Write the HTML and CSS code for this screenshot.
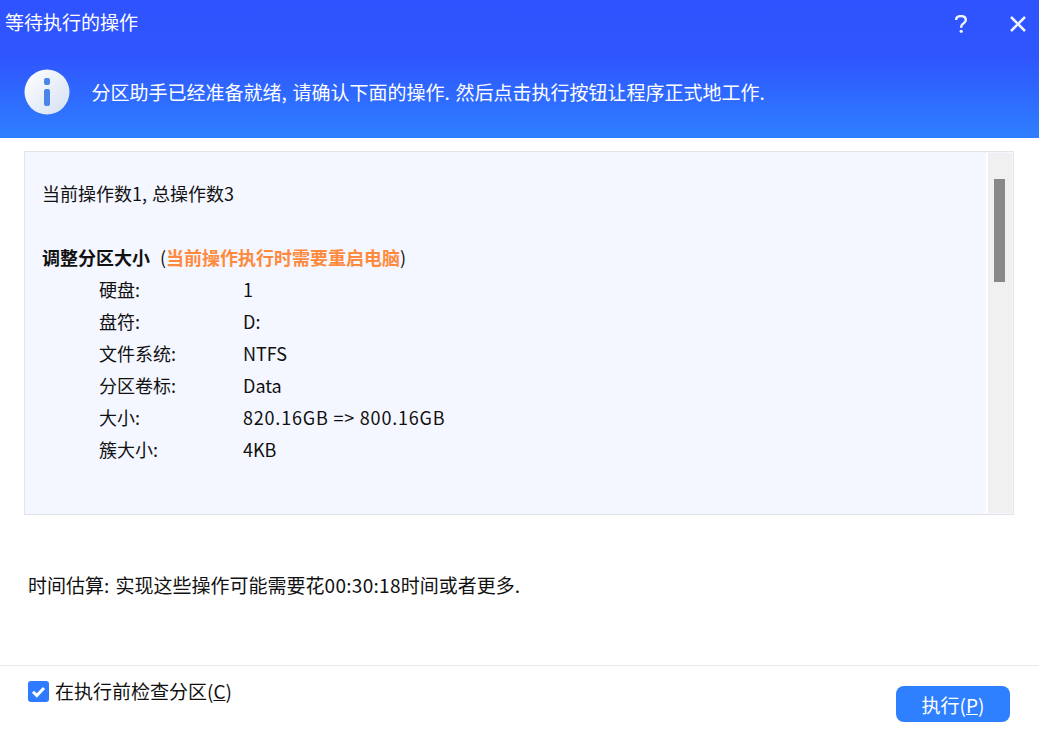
FILE: index.html
```html
<!DOCTYPE html>
<html lang="zh-CN">
<head>
<meta charset="utf-8">
<title>等待执行的操作</title>
<link rel="stylesheet" href="styles.css">
</head>
<body>
<div class="window">
  <header class="header">
    <div class="titlebar">
      <span class="title">等待执行的操作</span>
      <div class="actions">
        <svg class="icon-help" width="12" height="18" viewBox="0 0 12 18"><path d="M1.100 5C1.100 2.400 3 1.100 5.800 1.100c3 0 5 1.400 5 3.800 0 1.800-1 2.700-2.400 3.700C7 9.500 6.200 10.300 6.200 11.800v1" fill="none" stroke="#eef3ff" stroke-width="2.400"/><circle cx="6.200" cy="16.300" r="1.600" fill="#eef3ff"/></svg>
        <svg class="icon-close" width="16" height="16" viewBox="0 0 16 16"><path d="M1 1l14 14M15 1L1 15" fill="none" stroke="#eef3ff" stroke-width="2.500"/></svg>
      </div>
    </div>
    <div class="banner">
      <svg class="info" width="46" height="46" viewBox="0 0 46 46">
        <defs><linearGradient id="ig" x1="0" y1="0" x2="1" y2="1"><stop offset="0" stop-color="#ffffff"/><stop offset="1" stop-color="#d5e0f4"/></linearGradient></defs>
        <circle cx="23" cy="23" r="22.500" fill="url(#ig)"/>
        <rect x="20" y="9" width="6" height="7" rx="2" fill="#4a86ea"/>
        <rect x="20" y="20" width="6" height="17" rx="2" fill="#4a86ea"/>
      </svg>
      <p class="banner-text">分区助手已经准备就绪, 请确认下面的操作. 然后点击执行按钮让程序正式地工作.</p>
    </div>
  </header>
  <main class="main">
    <section class="panel">
      <div class="panel-body">
        <p class="line spaced">当前操作数1, 总操作数3</p>
        <p class="line blank"></p>
        <p class="line"><b class="op">调整分区大小</b><span class="paren">(</span><b class="warn">当前操作执行时需要重启电脑</b>)</p>
        <dl class="details">
          <dt>硬盘:</dt><dd>1</dd>
          <dt>盘符:</dt><dd>D:</dd>
          <dt>文件系统:</dt><dd>NTFS</dd>
          <dt>分区卷标:</dt><dd>Data</dd>
          <dt>大小:</dt><dd class="num">820.16GB =&gt; 800.16GB</dd>
          <dt>簇大小:</dt><dd>4KB</dd>
        </dl>
      </div>
      <div class="scrollbar"><div class="thumb"></div></div>
    </section>
    <p class="estimate">时间估算: 实现这些操作可能需要花<span class="time">00:30:18</span>时间或者更多.</p>
  </main>
  <footer class="footer">
    <label class="check">
      <span class="box"><svg width="21" height="21" viewBox="0 0 21 21"><path d="M5 10.800l3.800 3.800L16 7" fill="none" stroke="#fff" stroke-width="3"/></svg></span>
      <span>在执行前检查分区(<u>C</u>)</span>
    </label>
    <button class="run" type="button">执行(<u>P</u>)</button>
  </footer>
</div>
</body>
</html>
```
FILE: styles.css
```css
* { box-sizing: border-box; }
html, body { margin: 0; padding: 0; background: #fff; }
body { font-family: "Noto Sans CJK SC", "Noto Sans", sans-serif; color: #111; font-size: 18px; overflow: hidden; }
p, dl, dd, dt { margin: 0; }
.window { width: 1039px; height: 741px; display: flex; flex-direction: column; }
.header { height: 138px; background: linear-gradient(180deg, #2f54ff 0%, #2f55ff 40%, #2e7fff 100%); color: #fff; flex: none; }
.titlebar { height: 48px; display: flex; justify-content: space-between; align-items: center; padding: 0 13px 0 5px; }
.title { font-size: 19px; line-height: 24px; margin-bottom: 4px; }
.actions { display: flex; align-items: center; gap: 43px; }
.actions svg { display: block; }
.banner { display: flex; align-items: center; gap: 22px; padding: 0 0 0 24px; height: 46px; margin-top: 21px; }
.info { flex: none; }
.banner-text { font-size: 19px; line-height: 24px; word-spacing: 1.5px; margin-left: -0.5px; }
.main { flex: 1; padding: 13px 25px 0 24px; display: flex; flex-direction: column; }
.panel { height: 364px; border: 1px solid #e2e4ea; background: #f4f7ff; display: flex; flex: none; }
.panel-body { flex: 1; padding: 25px 17px 0; }
.line { height: 32px; line-height: 32px; white-space: nowrap; }
.spaced { word-spacing: 1px; }
.op { font-weight: 700; margin-right: 10px; }
.warn { color: #ff8a3d; font-weight: 700; }
.details { display: grid; grid-template-columns: 144px 1fr; grid-auto-rows: 32px; line-height: 32px; padding-left: 57px; }
.num { letter-spacing: 0.8px; }
.scrollbar { flex: none; width: 26px; margin: 1px 1px 1px 0; background: #f0f0f0; border-left: 2px solid #fff; padding: 26px 7px 0 6px; }
.thumb { width: 11px; height: 103px; background: #888; }
.estimate { margin: 55px 0 0 4px; line-height: 30px; font-size: 19px; word-spacing: 2px; }
.time { letter-spacing: 0.3px; }
.footer { flex: none; height: 76px; border-top: 1px solid #e8e8ee; display: flex; justify-content: space-between; align-items: flex-start; padding: 0 29px 0 28px; }
.check { display: flex; align-items: center; gap: 6px; margin-top: 12px; font-size: 19px; line-height: 26px; }
.box { width: 21px; height: 21px; border-radius: 3px; background: #2f7bff; display: block; }
.box svg { display: block; }
.run { margin-top: 20px; width: 114px; height: 36px; border: 0; border-radius: 8px; background: #2f80ff; color: #fff; font: inherit; font-size: 19px; padding: 0; }
```
